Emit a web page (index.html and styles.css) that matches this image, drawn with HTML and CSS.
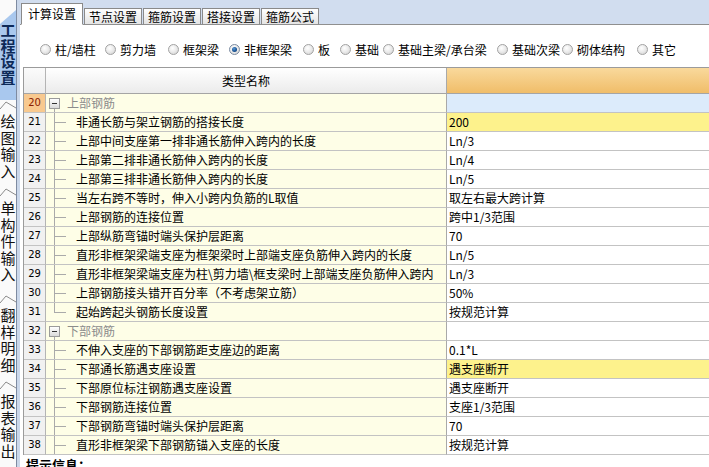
FILE: index.html
```
<!DOCTYPE html>
<html lang="zh">
<head>
<meta charset="utf-8">
<title>计算设置</title>
<link rel="stylesheet" href="styles.css">
</head>
<body>
<div class="app">
  <aside class="sidebar">
    <div class="side-top"></div>
    <div class="side-tab active"><span class="side-text">工程设置</span></div>
    <div class="side-tab t2"><svg class="fold" width="16" height="10" viewBox="0 0 16 10"><polyline points="0,9 6,2 16,8" fill="none" stroke="#8a8a8a" stroke-width="1"/></svg><span class="side-text">绘图输入</span></div>
    <div class="side-tab t3"><svg class="fold" width="16" height="10" viewBox="0 0 16 10"><polyline points="0,9 6,2 16,8" fill="none" stroke="#8a8a8a" stroke-width="1"/></svg><span class="side-text">单构件输入</span></div>
    <div class="side-tab t4"><svg class="fold" width="16" height="10" viewBox="0 0 16 10"><polyline points="0,9 6,2 16,8" fill="none" stroke="#8a8a8a" stroke-width="1"/></svg><span class="side-text">翻样明细</span></div>
    <div class="side-tab t5"><svg class="fold" width="16" height="10" viewBox="0 0 16 10"><polyline points="0,9 6,2 16,8" fill="none" stroke="#8a8a8a" stroke-width="1"/></svg><span class="side-text">报表输出</span></div>
  </aside>
  <div class="splitter"></div>
  <main class="main">
    <div class="tabstrip">
      <div class="tab active">计算设置</div>
      <div class="tab">节点设置</div>
      <div class="tab">箍筋设置</div>
      <div class="tab">搭接设置</div>
      <div class="tab">箍筋公式</div>
    </div>
    <div class="radios">
      <div class="radio-item"><span class="radio"></span>柱/墙柱</div>
      <div class="radio-item"><span class="radio"></span>剪力墙</div>
      <div class="radio-item"><span class="radio"></span>框架梁</div>
      <div class="radio-item"><span class="radio on"></span>非框架梁</div>
      <div class="radio-item"><span class="radio"></span>板</div>
      <div class="radio-item"><span class="radio"></span>基础</div>
      <div class="radio-item"><span class="radio"></span>基础主梁/承台梁</div>
      <div class="radio-item"><span class="radio"></span>基础次梁</div>
      <div class="radio-item"><span class="radio"></span>砌体结构</div>
      <div class="radio-item"><span class="radio"></span>其它</div>
    </div>
    <div class="grid">
      <div class="row head"><div class="c num"></div><div class="c name">类型名称</div><div class="c val"></div></div>
      <div class="row current"><div class="c num">20</div><div class="c name group"><span class="toggle"></span>上部钢筋</div><div class="c val"></div></div>
      <div class="row"><div class="c num">21</div><div class="c name child">非通长筋与架立钢筋的搭接长度</div><div class="c val hl">200</div></div>
      <div class="row"><div class="c num">22</div><div class="c name child">上部中间支座第一排非通长筋伸入跨内的长度</div><div class="c val">Ln/3</div></div>
      <div class="row"><div class="c num">23</div><div class="c name child">上部第二排非通长筋伸入跨内的长度</div><div class="c val">Ln/4</div></div>
      <div class="row"><div class="c num">24</div><div class="c name child">上部第三排非通长筋伸入跨内的长度</div><div class="c val">Ln/5</div></div>
      <div class="row"><div class="c num">25</div><div class="c name child">当左右跨不等时，伸入小跨内负筋的L取值</div><div class="c val">取左右最大跨计算</div></div>
      <div class="row"><div class="c num">26</div><div class="c name child">上部钢筋的连接位置</div><div class="c val">跨中1/3范围</div></div>
      <div class="row"><div class="c num">27</div><div class="c name child">上部纵筋弯锚时端头保护层距离</div><div class="c val">70</div></div>
      <div class="row"><div class="c num">28</div><div class="c name child">直形非框架梁端支座为框架梁时上部端支座负筋伸入跨内的长度</div><div class="c val">Ln/5</div></div>
      <div class="row"><div class="c num">29</div><div class="c name child">直形非框架梁端支座为柱\剪力墙\框支梁时上部端支座负筋伸入跨内</div><div class="c val">Ln/3</div></div>
      <div class="row"><div class="c num">30</div><div class="c name child">上部钢筋接头错开百分率（不考虑架立筋）</div><div class="c val">50%</div></div>
      <div class="row"><div class="c num">31</div><div class="c name child last">起始跨起头钢筋长度设置</div><div class="c val">按规范计算</div></div>
      <div class="row"><div class="c num">32</div><div class="c name group"><span class="toggle"></span>下部钢筋</div><div class="c val"></div></div>
      <div class="row"><div class="c num">33</div><div class="c name child">不伸入支座的下部钢筋距支座边的距离</div><div class="c val">0.1*L</div></div>
      <div class="row"><div class="c num">34</div><div class="c name child">下部通长筋遇支座设置</div><div class="c val hl">遇支座断开</div></div>
      <div class="row"><div class="c num">35</div><div class="c name child">下部原位标注钢筋遇支座设置</div><div class="c val">遇支座断开</div></div>
      <div class="row"><div class="c num">36</div><div class="c name child">下部钢筋连接位置</div><div class="c val">支座1/3范围</div></div>
      <div class="row"><div class="c num">37</div><div class="c name child">下部钢筋弯锚时端头保护层距离</div><div class="c val">70</div></div>
      <div class="row"><div class="c num">38</div><div class="c name child">直形非框架梁下部钢筋锚入支座的长度</div><div class="c val">按规范计算</div></div>
    </div>
    <div class="hint">提示信息：</div>
  </main>
</div>
</body>
</html>
```
FILE: styles.css
```
* { box-sizing: border-box; }
html, body { margin: 0; padding: 0; }
body {
  width: 709px;
  height: 467px;
  overflow: hidden;
  background: #fff;
  color: #000;
  font-family: "Noto Sans CJK SC", sans-serif;
  font-size: 12px;
}
.app { display: flex; height: 467px; }

/* sidebar */
.sidebar {
  width: 17px;
  flex: none;
  display: flex;
  flex-direction: column;
  background: #fafafa;
  border-right: 1px solid #7e8ba1;
}
.side-top { height: 10px; flex: none; }
.side-tab { flex: none; display: flex; flex-direction: column; align-items: stretch; }
.side-tab.active {
  height: 90px;
  padding-top: 12px;
  background: #a9c8ee;
  clip-path: polygon(0 14px, 100% 0, 100% 100%, 0 100%);
}
.side-tab.t2 { height: 87px; }
.side-tab.t3 { height: 107px; }
.side-tab.t4 { height: 86px; }
.side-tab.t5 { flex: 1; }
.fold { display: block; flex: none; margin-bottom: 3px; }
.side-text {
  display: block;
  width: 16px;
  font-size: 15px;
  line-height: 16.5px;
  word-break: break-all;
  text-align: center;
  color: #111;
}
.active .side-text { font-weight: bold; line-height: 15.5px; color: #0d2a58; }
.splitter { width: 3px; flex: none; background: #cad7ea; }

/* main */
.main { flex: 1; display: flex; flex-direction: column; min-width: 0; }
.tabstrip {
  height: 25px;
  flex: none;
  display: flex;
  align-items: flex-end;
  gap: 1px;
  padding-left: 1px;
  background: #d1ddef;
  border-bottom: 1px solid #8f8f8f;
}
.tab {
  height: 17px;
  line-height: 15px;
  padding: 0 4px;
  margin-bottom: -1px;
  border: 1px solid #8a8a8a;
  border-bottom: 1px solid #8f8f8f;
  background: linear-gradient(#fefefe, #e4e4e4);
  white-space: nowrap;
}
.tab.active {
  height: 22px;
  line-height: 20px;
  padding: 0 6px;
  background: #fff;
  border-bottom-color: #fff;
}

.radios {
  height: 42px;
  flex: none;
  padding: 6px 0 0 20px;
  display: grid;
  grid-template-columns: 65px 63px 61px 74px 37px 43px 114px 65px 75px auto;
  align-items: center;
}
.radio-item { display: flex; align-items: center; white-space: nowrap; }
.radio {
  width: 11px;
  height: 11px;
  flex: none;
  border-radius: 50%;
  border: 1px solid #a2a2a2;
  background: radial-gradient(circle at 40% 35%, #ffffff 0, #ececec 45%, #cdcdcd 100%);
  margin-right: 4px;
  display: flex;
  align-items: center;
  justify-content: center;
}
.radio.on { border-color: #7a8aa0; }
.radio.on::after {
  content: "";
  width: 5px;
  height: 5px;
  border-radius: 50%;
  background: radial-gradient(circle at 40% 35%, #5a9ad6 0, #1b5596 55%, #0c3466 100%);
}

/* grid */
.grid {
  flex: none;
  margin-left: 3px;
  border-left: 1px solid #9b9b9b;
  border-top: 1px solid #9b9b9b;
}
.row { display: grid; grid-template-columns: 22px 401px 1fr; }
.c {
  height: 19px;
  line-height: 18px;
  border-bottom: 1px solid #c3c3c3;
  white-space: nowrap;
  overflow: hidden;
}
.num {
  border-right: 1px solid #b4b4b4;
  background: #f1f1f1;
  text-align: center;
  font-family: "DejaVu Sans", sans-serif;
  font-size: 10px;
}
.name { border-right: 1px solid #a9a9a9; background: #fefee7; padding-left: 30px; }
.val { background: #fff; padding-left: 2px; }
.val.hl { background: #fdf28c; }

.head .c { height: 26px; line-height: 25px; border-bottom-color: #a5a5a5; }
.head .num { background: linear-gradient(#fbfbfb, #ececec); }
.head .name { background: linear-gradient(#ffffff, #ebebeb); text-align: center; padding-left: 0; }
.head .val { background: linear-gradient(#f9d99c, #f0bd69); }

.current .num { background: #f8c98f; color: #8a2000; }
.current .val { background: #dcebfb; }

.name.group {
  padding-left: 3px;
  color: #8c8c8c;
  display: flex;
  align-items: center;
  background: linear-gradient(#a9a9a9, #a9a9a9) 8px 15px / 1px 100% no-repeat, #fefee7;
}
.toggle {
  width: 11px;
  height: 11px;
  margin-right: 7px;
  border: 1px solid #9b9b9b;
  background: linear-gradient(#333, #333) center / 5px 1px no-repeat, linear-gradient(#ffffff, #dadada);
  flex: none;
}
.name.child {
  background:
    linear-gradient(#aaaaaa, #aaaaaa) 8px 0 / 1px 100% no-repeat,
    linear-gradient(#aaaaaa, #aaaaaa) 9px 9px / 11px 1px no-repeat,
    #fefee7;
}
.name.child.last {
  background:
    linear-gradient(#aaaaaa, #aaaaaa) 8px 0 / 1px 10px no-repeat,
    linear-gradient(#aaaaaa, #aaaaaa) 9px 9px / 11px 1px no-repeat,
    #fefee7;
}

.hint {
  margin: 2px 0 0 6px;
  font-size: 13px;
  line-height: 16px;
  font-weight: bold;
}
```
